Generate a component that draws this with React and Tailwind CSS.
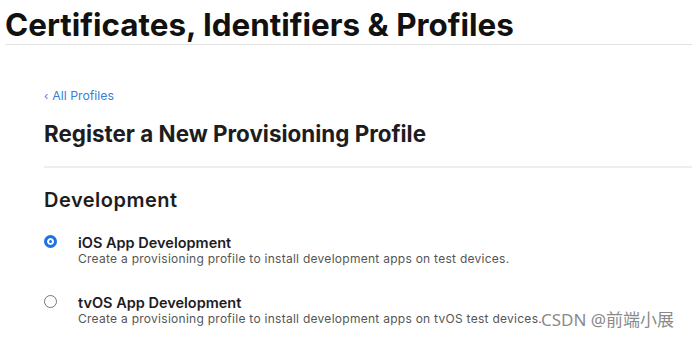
export default function App() {
  const font = { fontFamily: 'Inter, "Noto Sans CJK SC", sans-serif' };
  return (
    <div className="w-[692px] h-[340px] overflow-hidden bg-white relative" style={font}>
      <div className="pl-[5px] pt-[6px]">
        <h1 className="text-[31.4px] leading-[38px] font-bold text-[#111]">
          Certificates, Identifiers &amp; Profiles
        </h1>
        <div className="h-px bg-[#e3e3e3]" />
      </div>
      <div className="pl-[44px] pt-[44px]">
        <div className="text-[12.3px] leading-[14px] text-[#3a7fd4] flex items-center gap-[4px]">
          <span className="text-[11px]">‹</span>
          <span>All Profiles</span>
        </div>
        <h2 className="mt-[17px] text-[22.4px] leading-[28px] font-bold text-[#1d1d1f]">
          Register a New Provisioning Profile
        </h2>
        <div className="h-[2px] bg-[#eeeeee] mt-[18px]" />
        <h3 className="mt-[20px] text-[20px] leading-[24px] font-semibold text-[#1d1d1f] tracking-[0.5px]">
          Development
        </h3>
        <div className="mt-[22px] flex flex-col gap-[27px]">
          <div className="flex items-start">
            <div className="w-[13px] h-[13px] rounded-full bg-[#1a73e8] border-[3px] border-[#1a73e8] shadow-[inset_0_0_0_2px_#fff] mt-[1px]" />
            <div className="ml-[21px]">
              <div className="text-[14.5px] leading-[17px] font-semibold text-[#1d1d1f]">iOS App Development</div>
              <div className="text-[12px] leading-[16px] text-[#555] tracking-[0.27px]">Create a provisioning profile to install development apps on test devices.</div>
            </div>
          </div>
          <div className="flex items-start">
            <div className="w-[13px] h-[13px] rounded-full border border-[#767676] mt-[1px]" />
            <div className="ml-[21px]">
              <div className="text-[14.5px] leading-[17px] font-semibold text-[#1d1d1f]">tvOS App Development</div>
              <div className="text-[12px] leading-[16px] text-[#555] tracking-[0.27px]">
                Create a provisioning profile to install development apps on tvOS test devices.
              </div>
            </div>
          </div>
        </div>
      </div>
      <div className="absolute left-[541px] top-[310px] text-[17px] leading-[20px] text-[#8a8a8a]" style={{ fontFamily: '"Noto Sans", "Noto Sans CJK SC", sans-serif' }}>
        CSDN @前端小展
      </div>
    </div>
  );
}
